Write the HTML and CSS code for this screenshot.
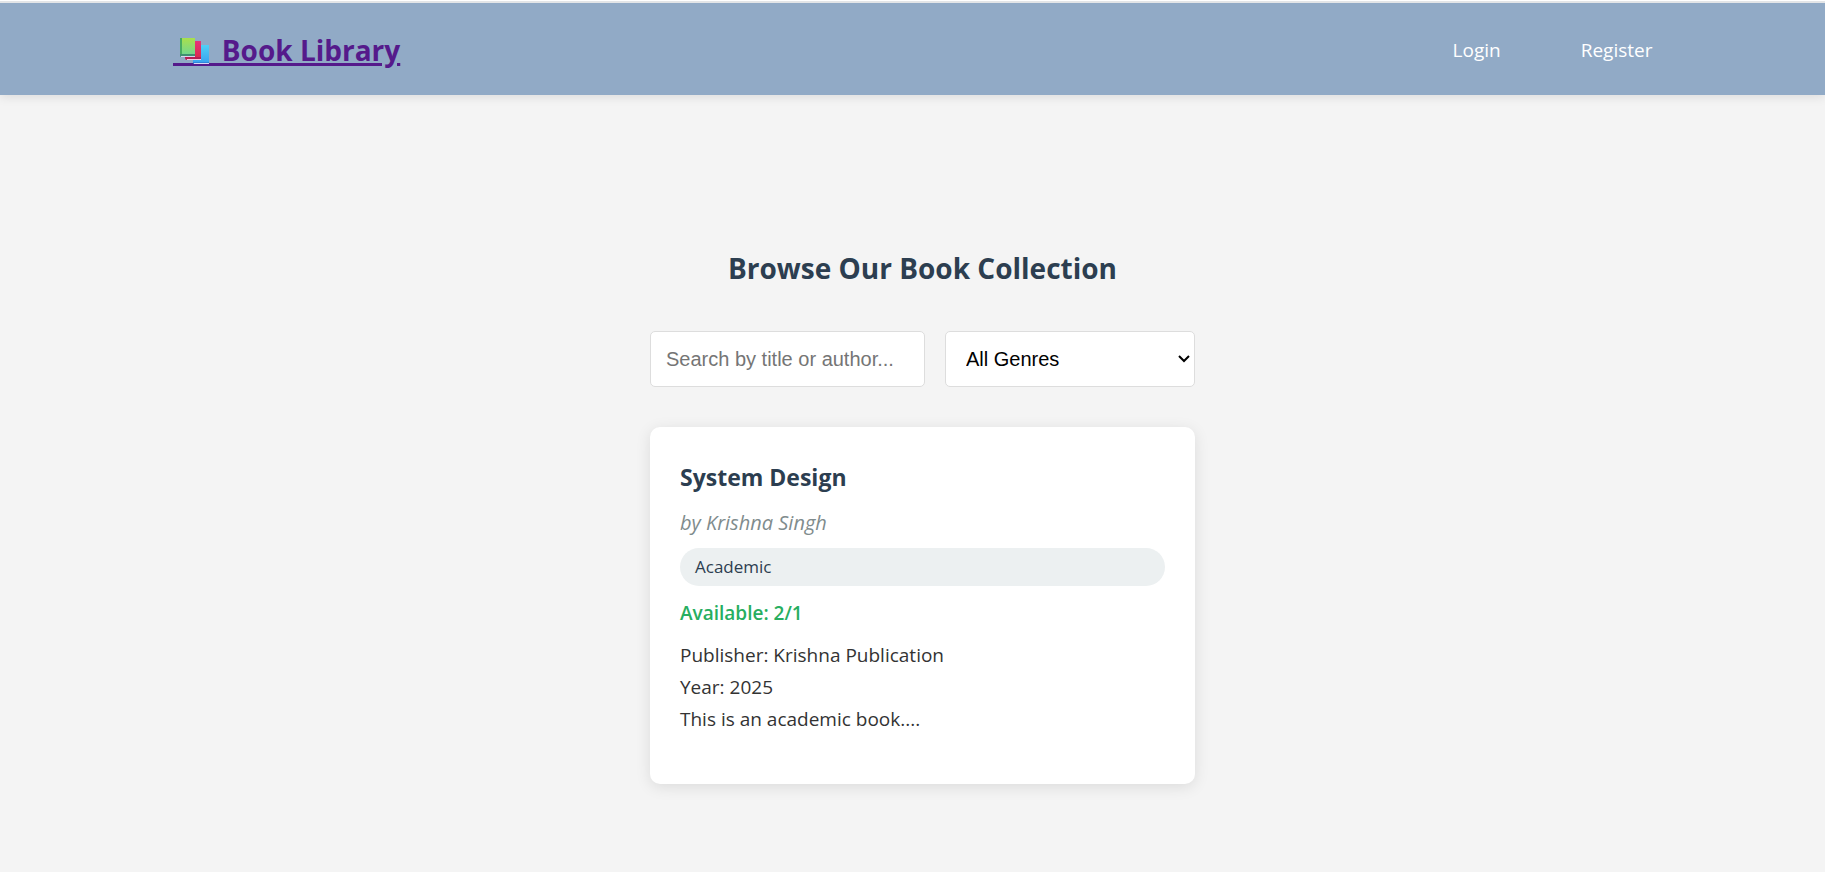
FILE: index.html
```html
<!DOCTYPE html>
<html lang="en">
<head>
<meta charset="utf-8">
<title>Book Library</title>
<link rel="stylesheet" href="styles.css">
</head>
<body>
<header class="header">
  <div class="header-inner">
    <h1 class="logo"><a href="#" class="logo-link"><svg class="logo-icon" viewBox="0 0 42 30" aria-hidden="true">
      <defs>
        <linearGradient id="green" x1="0" y1="0" x2="0" y2="1"><stop offset="0" stop-color="#a9e04c"/><stop offset="1" stop-color="#74d78d"/></linearGradient>
        <linearGradient id="red" x1="0" y1="0" x2="0" y2="1"><stop offset="0" stop-color="#e6337a"/><stop offset="1" stop-color="#d92c4c"/></linearGradient>
        <linearGradient id="blue" x1="0" y1="0" x2="0" y2="1"><stop offset="0" stop-color="#50d0f5"/><stop offset="1" stop-color="#3aa5f0"/></linearGradient>
      </defs>
      <path fill="#551a8b" d="M0 27h42v3H0z"/>
      <path fill="url(#blue)" d="M23 9h13v17H20v-2h3z"/>
      <path fill="#2f86d8" d="M20 26h16v2H21q-1 0-1-1z"/><path fill="#dcd6f5" d="M21 27h15v1H21z"/>
      <path fill="url(#red)" d="M14 5h14v17H13v-2h1z"/>
      <path fill="#b51f55" d="M12 21h16v3H14q-2 0-2-2z"/><path fill="#f5c9e0" d="M14 23h14v1H14z"/>
      <path fill="url(#green)" d="M7 2h15v16H7z"/><path fill="#47ab62" d="M7 2h2v16H7z"/>
      <path fill="#3f8f72" d="M7 18h15v3H8q-1 0-1-1z"/><path fill="#dcd3ee" d="M8 20h14v1H8z"/>
    </svg> Book Library</a></h1>
    <nav class="nav">
      <a href="#" class="nav-link">Login</a>
      <a href="#" class="nav-link">Register</a>
    </nav>
  </div>
</header>
<main class="main">
  <section class="catalog">
    <h2 class="catalog-title">Browse Our Book Collection</h2>
    <form class="filters">
      <input class="search" type="text" placeholder="Search by title or author..." aria-label="Search by title or author">
      <select class="genre" aria-label="Genre"><option>All Genres</option></select>
    </form>
    <article class="card">
      <h3 class="card-title">System Design</h3>
      <p class="author">by Krishna Singh</p>
      <span class="badge">Academic</span>
      <p class="stock">Available: 2/1</p>
      <p class="detail">Publisher: Krishna Publication</p>
      <p class="detail">Year: 2025</p>
      <p class="detail">This is an academic book....</p>
    </article>
  </section>
</main>
</body>
</html>
```

FILE: styles.css
```css
* { box-sizing: border-box; margin: 0; padding: 0; }
body {
  font-family: "Open Sans", "Noto Sans", sans-serif;
  font-size: 19px;
  line-height: 32px;
  color: #333;
  background: #f4f4f4;
  border-top: 1px solid #fff;
}
.header {
  background: #91aac6;
  border-top: 2px solid #e3e5e7;
  box-shadow: 0 2px 10px rgba(0, 0, 0, 0.1);
}
.header-inner {
  display: flex;
  justify-content: space-between;
  align-items: center;
  max-width: 1500px;
  margin: 0 auto;
  padding: 23px 10px 21px;
}
.logo { font-size: 28px; line-height: 48px; }
.logo-link {
  color: #551a8b;
  text-decoration: underline;
  text-decoration-thickness: 3px;
  text-underline-offset: 2px;
}
.logo-icon { width: 42px; height: 30px; vertical-align: -5px; }
.nav { display: flex; gap: 80px; }
.nav-link { color: #fff; text-decoration: none; }
.main { padding: 149px 20px 80px 40px; }
.catalog { width: fit-content; margin: 0 auto; }
.catalog-title {
  font-size: 28px;
  line-height: 48px;
  text-align: center;
  color: #2c3e50;
  margin-bottom: 39px;
}
.filters { display: flex; gap: 20px; margin-bottom: 40px; }
.search, .genre {
  height: 56px;
  font: 20px "Liberation Sans", Arial, sans-serif;
  background: #fff;
  border: 1px solid #ddd;
  border-radius: 5px;
}
.search { width: 275px; padding: 0 15px; }
.search::placeholder { color: #757575; }
.genre {
  width: 250px;
  padding: 0 20px;
  color: #000;
  appearance: none;
  background: #fff url("data:image/svg+xml,%3Csvg xmlns='http://www.w3.org/2000/svg' width='12' height='8'%3E%3Cpath d='M1 1l5 5 5-5' fill='none' stroke='%23000' stroke-width='2'/%3E%3C/svg%3E") no-repeat right 4px center;
}
.card {
  display: flex;
  flex-direction: column;
  padding: 30px 30px 49px;
  background: #fff;
  border-radius: 10px;
  box-shadow: 0 3px 15px rgba(0, 0, 0, 0.1);
}
.card-title { font-size: 23px; line-height: 40px; color: #2c3e50; margin-bottom: 10px; }
.author { font-size: 20px; font-style: italic; color: #7f8c8d; margin-bottom: 9px; }
.badge {
  padding: 3px 15px;
  font-size: 17px;
  color: #2c3e50;
  background: #ecf0f1;
  border-radius: 19px;
  margin-bottom: 11px;
}
.stock { font-weight: 600; color: #27ae60; margin-bottom: 10px; }
```
